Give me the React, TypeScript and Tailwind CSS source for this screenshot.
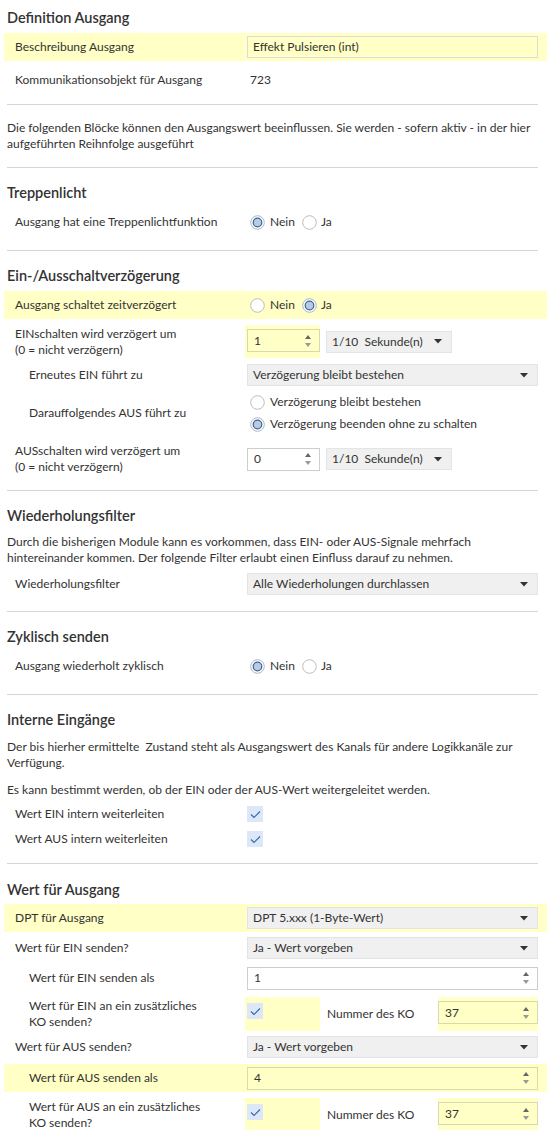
import React from "react";
import clsx from "clsx";

const Y = "bg-[#ffffc6]";

const Heading = ({ children, className }: { children: React.ReactNode; className?: string }) => (
  <div className={clsx("pl-[3px] text-[14.5px] leading-[20px] font-semibold text-[#333]", className)}>{children}</div>
);

const Sep = ({ className }: { className?: string }) => (
  <div className={clsx("ml-[3px] mr-[9px] h-px bg-[#d5d5d5]", className)} />
);

const Row = ({
  label,
  children,
  hl,
  indent,
  className,
}: {
  label: React.ReactNode;
  children?: React.ReactNode;
  hl?: boolean;
  indent?: boolean;
  className?: string;
}) => (
  <div className={clsx("flex items-center pl-[11px] pr-[9px]", hl && Y, className)}>
    <div className={clsx("w-[232px] shrink-0 leading-[16px]", indent && "pl-[14px]")}>{label}</div>
    <div className="flex-1 flex items-center">{children}</div>
  </div>
);

const Arrow = () => (
  <svg width="8" height="5" viewBox="0 0 8 5" className="shrink-0">
    <path d="M0 0h8L4 4.5z" fill="#333" />
  </svg>
);

const Dropdown = ({ value, className }: { value: string; className?: string }) => (
  <div
    className={clsx(
      "h-[22px] bg-[#f0f0f0] border border-[#e4e4e4] pl-[5px] pr-[9px] flex items-center justify-between",
      className ?? "w-full"
    )}
  >
    <span className="whitespace-pre">{value}</span>
    <Arrow />
  </div>
);

const SpinArrows = () => (
  <div className="flex flex-col gap-[4px] shrink-0">
    <svg width="6" height="4" viewBox="0 0 6 4">
      <path d="M0 4h6L3 0z" fill="#666" />
    </svg>
    <svg width="6" height="4" viewBox="0 0 6 4">
      <path d="M0 0h6L3 4z" fill="#999" />
    </svg>
  </div>
);

const Spin = ({ value, className, yellow }: { value: string; className?: string; yellow?: boolean }) => (
  <div
    className={clsx(
      "h-[23px] border pl-[6px] pr-[8px] flex items-center justify-between",
      yellow ? "bg-[#ffffc6] border-[#d9d9b0]" : "bg-white border-[#cdcdcd]",
      className ?? "w-full"
    )}
  >
    <span>{value}</span>
    <SpinArrows />
  </div>
);

const Radio = ({ checked }: { checked?: boolean }) => (
  <svg width="15" height="15" viewBox="0 0 15 15" className="shrink-0">
    {checked ? (
      <>
        <circle cx="7.5" cy="7.5" r="6.8" fill="#fff" stroke="#a9b7c9" />
        <circle cx="7.5" cy="7.5" r="4.3" fill="#b9cbe2" stroke="#3f6494" strokeWidth="1.2" />
      </>
    ) : (
      <circle cx="7.5" cy="7.5" r="6.8" fill="#fff" stroke="#bdbdbd" />
    )}
  </svg>
);

const RadioPair = ({ nein }: { nein: boolean }) => (
  <div className="flex items-center pl-[3px]">
    <Radio checked={nein} />
    <span className="ml-[5px]">Nein</span>
    <span className="ml-[7px]">
      <Radio checked={!nein} />
    </span>
    <span className="ml-[4px]">Ja</span>
  </div>
);

const Check = () => (
  <div className="w-[16px] h-[16px] bg-[#dce8f8] flex items-center justify-center">
    <svg width="11" height="9" viewBox="0 0 11 9">
      <path d="M1 4.5l3 3L10 1.5" fill="none" stroke="#3c68b0" strokeWidth="1.2" />
    </svg>
  </div>
);

const Para = ({ children, className }: { children: React.ReactNode; className?: string }) => (
  <div className={clsx("pl-[3px] pr-[9px] leading-[16px]", className)}>{children}</div>
);

export default function App() {
  return (
    <div className="w-[547px] min-h-[1130px] bg-white pl-[4px] pb-[10px] text-[12px] text-[#333] font-['Lato',sans-serif]">
      <Heading className="pt-[8px]">Definition Ausgang</Heading>
      <Row hl label="Beschreibung Ausgang" className="h-[28px] mt-[5px]">
        <div className="w-full h-[22px] border border-[#dcdcdc] pl-[5px] flex items-center">Effekt Pulsieren (int)</div>
      </Row>
      <Row label="Kommunikationsobjekt für Ausgang" className="h-[26px] mt-[6px]">
        <span className="pl-[3px]">723</span>
      </Row>
      <Sep className="mt-[11px]" />
      <Para className="mt-[15px]">
        Die folgenden Blöcke können den Ausgangswert beeinflussen. Sie werden - sofern aktiv - in der hier aufgeführten
        Reihnfolge ausgeführt
      </Para>
      <Sep className="mt-[15px]" />

      <Heading className="mt-[15px]">Treppenlicht</Heading>
      <Row label="Ausgang hat eine Treppenlichtfunktion" className="h-[26px] mt-[6px]">
        <RadioPair nein />
      </Row>
      <Sep className="mt-[15px]" />

      <Heading className="mt-[15px]">Ein-/Ausschaltverzögerung</Heading>
      <Row hl label="Ausgang schaltet zeitverzögert" className="h-[28px] mt-[5px]">
        <RadioPair nein={false} />
      </Row>
      <Row
        label={
          <>
            EINschalten wird verzögert um
            <br />
            (0 = nicht verzögern)
          </>
        }
        className="h-[33px] mt-[6px]"
      >
        <div className={clsx("-ml-[2px] w-[75px] h-[33px] pl-[2px] pt-[4px]", Y)}>
          <Spin value="1" yellow className="w-[73px]" />
        </div>
        <Dropdown value="1/10  Sekunde(n)" className="w-[126px] ml-[6px]" />
      </Row>
      <Row indent label="Erneutes EIN führt zu" className="h-[26px] mt-[4px]">
        <Dropdown value="Verzögerung bleibt bestehen" />
      </Row>
      <Row indent label="Darauffolgendes AUS führt zu" className="h-[40px] mt-[5px]">
        <div className="flex flex-col gap-[4px] pl-[3px]">
          <div className="flex items-center">
            <Radio />
            <span className="ml-[5px]">Verzögerung bleibt bestehen</span>
          </div>
          <div className="flex items-center">
            <Radio checked />
            <span className="ml-[5px]">Verzögerung beenden ohne zu schalten</span>
          </div>
        </div>
      </Row>
      <Row
        label={
          <>
            AUSschalten wird verzögert um
            <br />
            (0 = nicht verzögern)
          </>
        }
        className="h-[32px] mt-[10px]"
      >
        <Spin value="0" className="w-[73px]" />
        <Dropdown value="1/10  Sekunde(n)" className="w-[126px] ml-[6px]" />
      </Row>
      <Sep className="mt-[15px]" />

      <Heading className="mt-[15px]">Wiederholungsfilter</Heading>
      <Para className="mt-[8px]">
        Durch die bisherigen Module kann es vorkommen, dass EIN- oder AUS-Signale mehrfach hintereinander kommen. Der
        folgende Filter erlaubt einen Einfluss darauf zu nehmen.
      </Para>
      <Row label="Wiederholungsfilter" className="h-[26px] mt-[5px]">
        <Dropdown value="Alle Wiederholungen durchlassen" />
      </Row>
      <Sep className="mt-[14px]" />

      <Heading className="mt-[15px]">Zyklisch senden</Heading>
      <Row label="Ausgang wiederholt zyklisch" className="h-[26px] mt-[6px]">
        <RadioPair nein />
      </Row>
      <Sep className="mt-[15px]" />

      <Heading className="mt-[15px]">Interne Eingänge</Heading>
      <Para className="mt-[9px]">
        Der bis hierher ermittelte&nbsp; Zustand steht als Ausgangswert des Kanals für andere Logikkanäle zur Verfügung.
      </Para>
      <Para className="mt-[11px]">Es kann bestimmt werden, ob der EIN oder der AUS-Wert weitergeleitet werden.</Para>
      <Row label="Wert EIN intern weiterleiten" className="h-[24px] mt-[4px]">
        <Check />
      </Row>
      <Row label="Wert AUS intern weiterleiten" className="h-[24px] mt-[1px]">
        <Check />
      </Row>
      <Sep className="mt-[12px]" />

      <Heading className="mt-[16px]">Wert für Ausgang</Heading>
      <Row hl label="DPT für Ausgang" className="h-[28px] mt-[4px]">
        <Dropdown value="DPT 5.xxx (1-Byte-Wert)" />
      </Row>
      <Row label="Wert für EIN senden?" className="h-[26px] mt-[3px]">
        <Dropdown value="Ja - Wert vorgeben" />
      </Row>
      <Row indent label="Wert für EIN senden als" className="h-[26px] mt-[4px]">
        <Spin value="1" />
      </Row>
      <Row
        indent
        label={
          <>
            Wert für EIN an ein zusätzliches
            <br />
            KO senden?
          </>
        }
        className="h-[34px] mt-[6px]"
      >
        <div className={clsx("-ml-[2px] w-[75px] h-[34px] pl-[2px] pt-[6px]", Y)}>
          <Check />
        </div>
        <span className="ml-[7px] w-[111px]">Nummer des KO</span>
        <div className={clsx("flex-1 h-[34px] pt-[4px]", Y)}>
          <Spin value="37" yellow />
        </div>
      </Row>
      <Row label="Wert für AUS senden?" className="h-[26px] mt-[3px]">
        <Dropdown value="Ja - Wert vorgeben" />
      </Row>
      <Row hl indent label="Wert für AUS senden als" className="h-[28px] mt-[4px]">
        <Spin value="4" yellow />
      </Row>
      <Row
        indent
        label={
          <>
            Wert für AUS an ein zusätzliches
            <br />
            KO senden?
          </>
        }
        className="h-[34px] mt-[6px]"
      >
        <div className={clsx("-ml-[2px] w-[75px] h-[34px] pl-[2px] pt-[6px]", Y)}>
          <Check />
        </div>
        <span className="ml-[7px] w-[111px]">Nummer des KO</span>
        <div className={clsx("flex-1 h-[34px] pt-[4px]", Y)}>
          <Spin value="37" yellow />
        </div>
      </Row>
    </div>
  );
}
